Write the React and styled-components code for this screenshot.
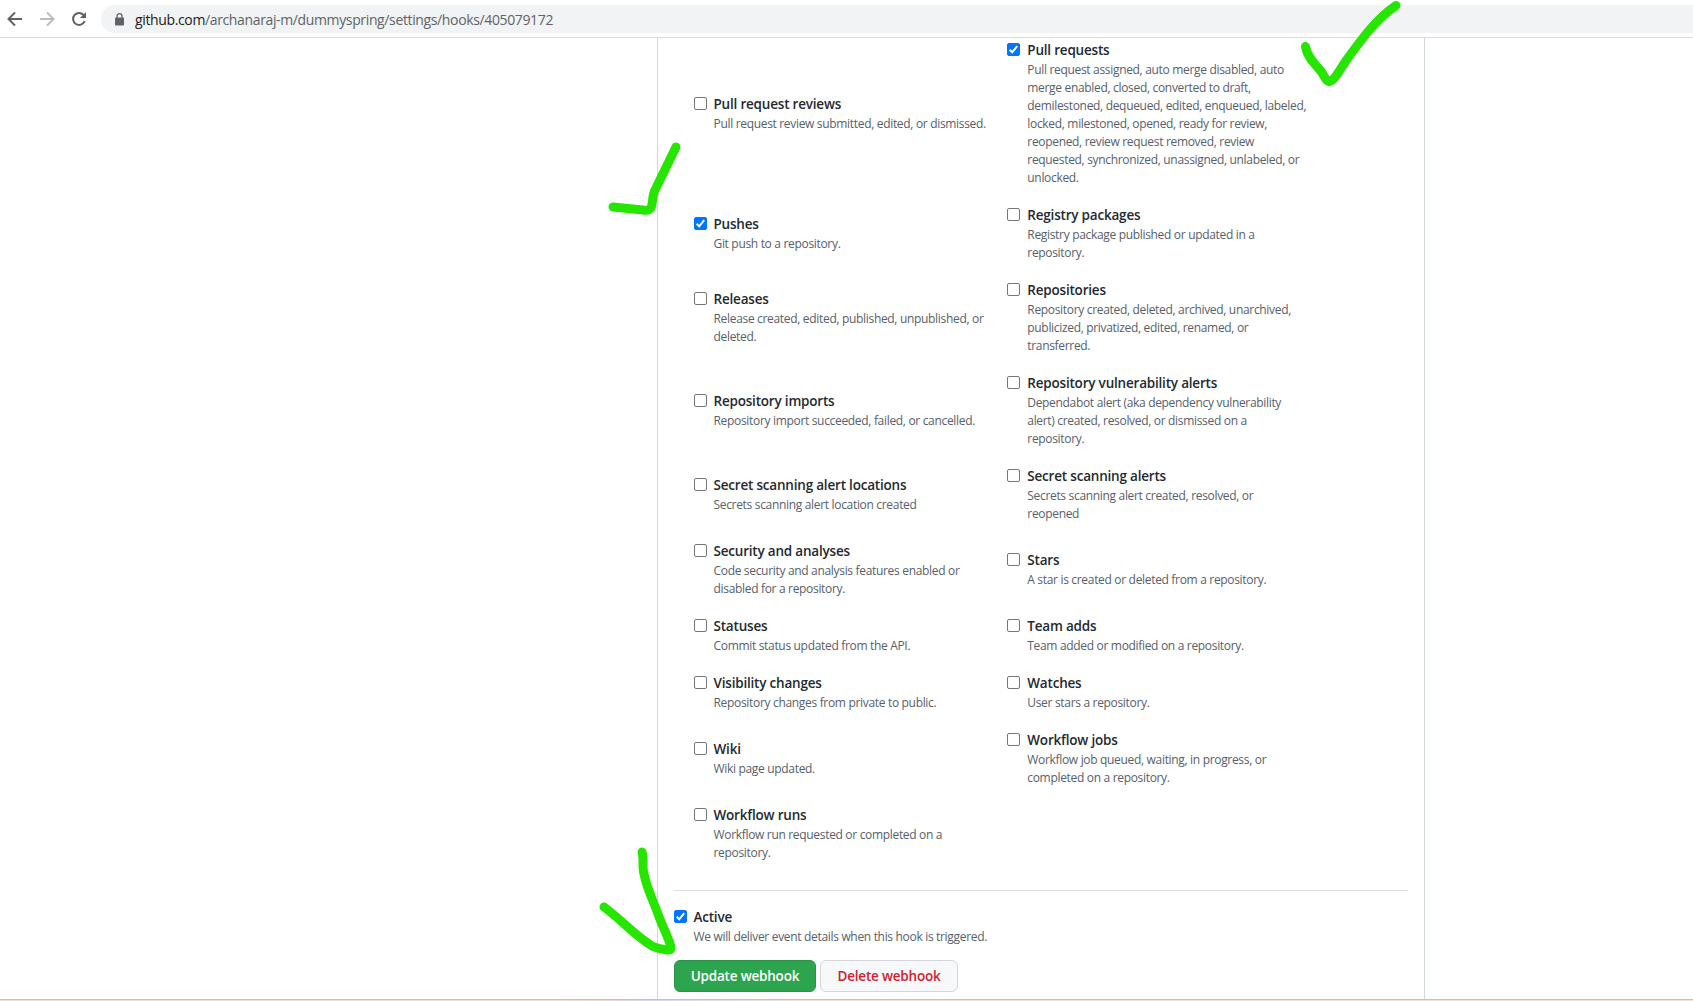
import React from "react";
import styled, { createGlobalStyle } from "styled-components";

const GlobalStyle = createGlobalStyle`
  * { box-sizing: border-box; }
  body {
    margin: 0;
    background: #fff;
    color: #24292f;
    font-family: "Open Sans", "Noto Sans", sans-serif;
    overflow: hidden;
  }
`;

const Screen = styled.div`
  position: relative;
  display: flex;
  flex-direction: column;
  width: 1693px;
  height: 1001px;
  overflow: hidden;
`;

const Toolbar = styled.header`
  display: flex;
  flex: none;
  align-items: center;
  height: 38px;
  border-bottom: 1px solid #dadce0;
`;

const NavIcons = styled.svg`
  flex: none;
  width: 101px;
  height: 37px;
`;

const AddressBar = styled.div`
  display: flex;
  flex: 1;
  align-items: center;
  gap: 11px;
  height: 28px;
  margin-top: 1px;
  padding-left: 14px;
  border-radius: 14px 0 0 14px;
  background: #f1f3f4;
`;

const LockIcon = styled.svg`
  flex: none;
  width: 9px;
  height: 13px;
`;

const Url = styled.span`
  padding-top: 1px;
  font-size: 14px;
  line-height: 20px;
  letter-spacing: -0.365px;
  color: #5f6368;
  white-space: nowrap;
`;

const Host = styled.span`
  color: #202124;
`;

const Page = styled.main`
  display: flex;
  flex: 1;
  flex-direction: column;
  width: 768px;
  margin-left: 657px;
  padding: 1px 16px 0;
  border: solid #d0d7de;
  border-width: 0 1px;
`;

const Events = styled.div`
  display: grid;
  grid-template-columns: 313px 313px;
  align-items: center;
  row-gap: 18px;
  margin-left: 20px;
`;

const Option = styled.label`
  display: grid;
  grid-template-columns: 19.5px 1fr;

  &:nth-child(even) {
    grid-template-columns: 20.3px 1fr;
  }
`;

const Checkbox = styled.input.attrs({ type: "checkbox" })`
  appearance: none;
  width: 13px;
  height: 13px;
  margin: 4px 0 0;
  border: 1px solid #767676;
  border-radius: 2px;
  background: #fff;

  &:checked {
    border-color: #0075ff;
    background: #0075ff
      url("data:image/svg+xml,%3Csvg xmlns='http://www.w3.org/2000/svg' viewBox='0 0 13 13'%3E%3Cpath d='M2.7 6.8l2.5 2.5 5-6.2' fill='none' stroke='white' stroke-width='2'/%3E%3C/svg%3E")
      center / 13px 13px no-repeat;
  }
`;

const Title = styled.span`
  height: 21px;
  padding-top: 1px;
  font-size: 13.5px;
  font-weight: 600;
  line-height: 21px;
  letter-spacing: -0.2px;
  white-space: nowrap;
`;

const Note = styled.span`
  grid-column: 2;
  margin-bottom: -1px;
  padding-top: 1px;
  font-size: 12px;
  line-height: 18px;
  letter-spacing: -0.32px;
  color: #57606a;
  white-space: pre;
`;

const Divider = styled.hr`
  width: 100%;
  height: 1px;
  margin: 29px 0 15px;
  border: 0;
  background: #d8dee4;
`;

const Actions = styled.div`
  display: flex;
  gap: 4px;
  margin-top: 15px;
`;

const Button = styled.button`
  width: ${(p) => p.$width}px;
  height: 32px;
  padding: 0;
  border: 1px solid ${(p) => (p.$primary ? "#2a9147" : "#d5d8da")};
  border-radius: 6px;
  background: ${(p) => (p.$primary ? "#2da44e" : "#f6f8fa")};
  color: ${(p) => (p.$primary ? "#fff" : "#cf222e")};
  font: 600 13.5px/20px "Open Sans", "Noto Sans", sans-serif;
  letter-spacing: -0.2px;
`;

const Marks = styled.svg`
  position: absolute;
  inset: 0;
  pointer-events: none;
`;

const WindowEdge = styled.div`
  flex: none;
  height: 2px;
  border-top: 1px solid #c6c1ba;
  background: linear-gradient(90deg, #f1dfc6 0 560px, #ead8d2 610px, #cfdcec 655px, #dcdfe4 700px, #f1e2cb 800px);
`;

const EVENTS = [
  ["Pull request reviews", "Pull request review submitted, edited, or dismissed."],
  ["Pull requests", "Pull request assigned, auto merge disabled, auto\nmerge enabled, closed, converted to draft,\ndemilestoned, dequeued, edited, enqueued, labeled,\nlocked, milestoned, opened, ready for review,\nreopened, review request removed, review\nrequested, synchronized, unassigned, unlabeled, or\nunlocked.", true],
  ["Pushes", "Git push to a repository.", true],
  ["Registry packages", "Registry package published or updated in a\nrepository."],
  ["Releases", "Release created, edited, published, unpublished, or\ndeleted."],
  ["Repositories", "Repository created, deleted, archived, unarchived,\npublicized, privatized, edited, renamed, or\ntransferred."],
  ["Repository imports", "Repository import succeeded, failed, or cancelled."],
  ["Repository vulnerability alerts", "Dependabot alert (aka dependency vulnerability\nalert) created, resolved, or dismissed on a\nrepository."],
  ["Secret scanning alert locations", "Secrets scanning alert location created"],
  ["Secret scanning alerts", "Secrets scanning alert created, resolved, or\nreopened"],
  ["Security and analyses", "Code security and analysis features enabled or\ndisabled for a repository."],
  ["Stars", "A star is created or deleted from a repository."],
  ["Statuses", "Commit status updated from the API."],
  ["Team adds", "Team added or modified on a repository."],
  ["Visibility changes", "Repository changes from private to public."],
  ["Watches", "User stars a repository."],
  ["Wiki", "Wiki page updated."],
  ["Workflow jobs", "Workflow job queued, waiting, in progress, or\ncompleted on a repository."],
  ["Workflow runs", "Workflow run requested or completed on a\nrepository."],
];

function EventOption({ title, note, checked }) {
  return (
    <Option>
      <Checkbox defaultChecked={checked} />
      <Title>{title}</Title>
      <Note>{note}</Note>
    </Option>
  );
}

export default function App() {
  return (
    <Screen>
      <GlobalStyle />
      <Toolbar>
        <NavIcons viewBox="0 0 101 37" fill="none" strokeWidth="2">
          <path d="M22 19H9.500M15 12.500L8.500 19L15 25.500" stroke="#5f6368" />
          <path d="M40 19h12.500M47 12.500L53.500 19L47 25.500" stroke="#babcbe" />
          <path d="M84 15.500A6 6 0 1 0 84.700 21" stroke="#5f6368" />
          <path d="M86 12v6h-6z" fill="#5f6368" />
        </NavIcons>
        <AddressBar>
          <LockIcon viewBox="0 0 9 13">
            <rect x="0" y="4.500" width="9" height="8" rx="1" fill="#5f6368" />
            <path d="M2 5V3.200a2.500 2.500 0 0 1 5 0V5" fill="none" stroke="#5f6368" strokeWidth="1.300" />
          </LockIcon>
          <Url>
            <Host>github.com</Host>/archanaraj-m/dummyspring/settings/hooks/405079172
          </Url>
        </AddressBar>
      </Toolbar>
      <Page>
        <Events>
          {EVENTS.map(([title, note, checked]) => (
            <EventOption key={title} title={title} note={note} checked={checked} />
          ))}
        </Events>
        <Divider />
        <EventOption title="Active" note="We will deliver event details when this hook is triggered." checked />
        <Actions>
          <Button $primary $width={142}>Update webhook</Button>
          <Button $width={138}>Delete webhook</Button>
        </Actions>
      </Page>
      <WindowEdge />
      <Marks width="1693" height="1001" viewBox="0 0 1693 1001" fill="none" stroke="#26e600" strokeWidth="9" strokeLinecap="round" strokeLinejoin="round">
        <path d="M1305.500 46.500C1307 57 1315 64 1320 70C1325 76 1325 81 1329 81.500C1335 81 1339 70 1348 58C1361 40 1376 19 1396 5.500" />
        <path d="M613 207L643 210C656 212 650 200 655 190L676 147" />
        <path d="M642 852C644 858 642 867 644 874C647 889 653 900 658 914C663 928 668 936 671 947C671 951 669 950 667 950C660 949 656 948 652 946C632 933 624 922 604 907" />
      </Marks>
    </Screen>
  );
}
